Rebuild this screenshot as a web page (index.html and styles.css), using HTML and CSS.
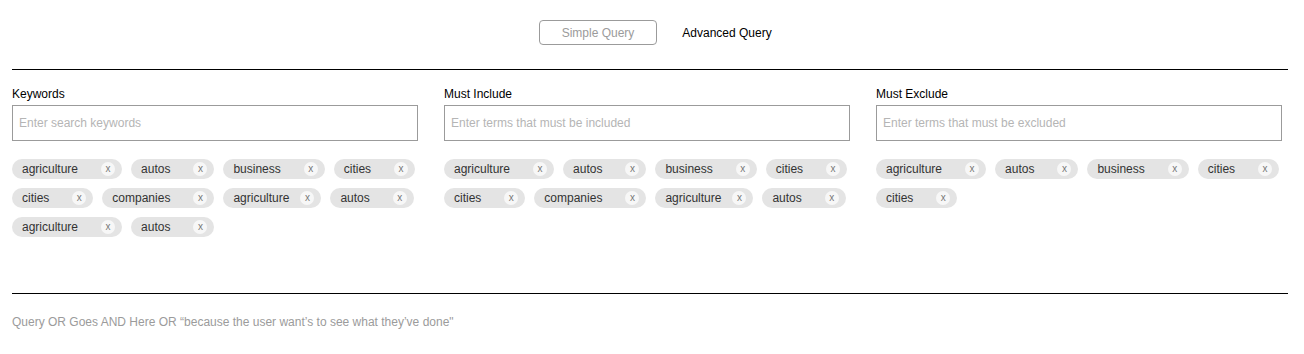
FILE: index.html
```html
<!DOCTYPE html>
<html lang="en">
  <head>
    <meta charset="UTF-8" />
    <meta name="viewport" content="width=device-width, initial-scale=1.0" />
    <title>Query Builder</title>
    <link rel="stylesheet" href="styles.css">
  </head>
  <body>
    <div class="mode-toggle">
      <button class="mode-button active">Simple Query</button>
      <button class="mode-button">Advanced Query</button>
    </div>

    <hr class="divider" />

    <div class="fields">
      <!-- Keywords -->
      <div class="field">
        <label class="field-label" for="keywords">Keywords</label>
        <input id="keywords" class="field-input" type="text" placeholder="Enter search keywords" />
        <div class="tag-list">
          <span class="tag"><span class="tag-text">agriculture</span><span class="tag-remove">x</span></span>
          <span class="tag"><span class="tag-text">autos</span><span class="tag-remove">x</span></span>
          <span class="tag"><span class="tag-text">business</span><span class="tag-remove">x</span></span>
          <span class="tag"><span class="tag-text">cities</span><span class="tag-remove">x</span></span>
          <span class="tag"><span class="tag-text">cities</span><span class="tag-remove">x</span></span>
          <span class="tag"><span class="tag-text">companies</span><span class="tag-remove">x</span></span>
          <span class="tag compact"><span class="tag-text">agriculture</span><span class="tag-remove">x</span></span>
          <span class="tag"><span class="tag-text">autos</span><span class="tag-remove">x</span></span>
          <span class="tag"><span class="tag-text">agriculture</span><span class="tag-remove">x</span></span>
          <span class="tag"><span class="tag-text">autos</span><span class="tag-remove">x</span></span>
        </div>
      </div>

      <!-- Must Include -->
      <div class="field">
        <label class="field-label" for="include">Must Include</label>
        <input id="include" class="field-input" type="text" placeholder="Enter terms that must be included" />
        <div class="tag-list">
          <span class="tag"><span class="tag-text">agriculture</span><span class="tag-remove">x</span></span>
          <span class="tag"><span class="tag-text">autos</span><span class="tag-remove">x</span></span>
          <span class="tag"><span class="tag-text">business</span><span class="tag-remove">x</span></span>
          <span class="tag"><span class="tag-text">cities</span><span class="tag-remove">x</span></span>
          <span class="tag"><span class="tag-text">cities</span><span class="tag-remove">x</span></span>
          <span class="tag"><span class="tag-text">companies</span><span class="tag-remove">x</span></span>
          <span class="tag compact"><span class="tag-text">agriculture</span><span class="tag-remove">x</span></span>
          <span class="tag"><span class="tag-text">autos</span><span class="tag-remove">x</span></span>
        </div>
      </div>

      <!-- Must Exclude -->
      <div class="field">
        <label class="field-label" for="exclude">Must Exclude</label>
        <input id="exclude" class="field-input" type="text" placeholder="Enter terms that must be excluded" />
        <div class="tag-list">
          <span class="tag"><span class="tag-text">agriculture</span><span class="tag-remove">x</span></span>
          <span class="tag"><span class="tag-text">autos</span><span class="tag-remove">x</span></span>
          <span class="tag"><span class="tag-text">business</span><span class="tag-remove">x</span></span>
          <span class="tag"><span class="tag-text">cities</span><span class="tag-remove">x</span></span>
          <span class="tag"><span class="tag-text">cities</span><span class="tag-remove">x</span></span>
        </div>
      </div>
    </div>

    <hr class="divider" />

    <p class="query-preview">Query OR Goes AND Here OR “because the user want’s to see what they’ve done"</p>
  </body>
</html>
```

FILE: styles.css
```css
:root {
  --text-color: #000;
  --muted-color: #9b9b9b;
  --border-color: #9b9b9b;
  --tag-bg: #e4e4e4;
  --tag-text: #333;
  --remove-bg: #f7f7f7;
}
body {
  margin: 0;
  padding: 20px 16px 0 12px;
  font-family: "Liberation Sans", Arial, sans-serif;
  font-size: 12px;
  color: var(--text-color);
  background: #fff;
}

/* Simple / Advanced toggle */
.mode-toggle {
  display: flex;
  justify-content: center;
  gap: 11px;
  padding-left: 25px;
  margin-bottom: 24px;
}
.mode-button {
  width: 118px;
  height: 25px;
  padding: 0;
  font-family: inherit;
  font-size: 12px;
  color: var(--text-color);
  background: none;
  border: 1px solid transparent;
  border-radius: 4px;
  cursor: pointer;
}
.mode-button.active {
  color: var(--muted-color);
  border-color: var(--border-color);
}

.divider {
  margin: 0;
  border: none;
  border-top: 1px solid #000;
}

/* Three field columns */
.fields {
  display: grid;
  grid-template-columns: repeat(3, 406px);
  column-gap: 26px;
  padding-top: 17px;
  height: 206px;
}
.field-label {
  display: block;
  line-height: 14px;
  margin-bottom: 4px;
}
.field-input {
  box-sizing: border-box;
  width: 100%;
  height: 36px;
  margin: 0;
  padding: 0 6px;
  font-family: inherit;
  font-size: 12px;
  border: 1px solid var(--border-color);
  border-radius: 0;
  outline: none;
}
.field-input::placeholder {
  color: #b5b5b5;
}

.tag-list {
  display: flex;
  flex-wrap: wrap;
  gap: 9px;
  margin-top: 18px;
}
.tag {
  display: inline-flex;
  align-items: center;
  height: 20px;
  padding: 0 7px 0 10px;
  background: var(--tag-bg);
  border-radius: 10px;
  color: var(--tag-text);
}
.tag-remove {
  display: flex;
  align-items: center;
  justify-content: center;
  width: 14px;
  height: 14px;
  margin-left: 23px;
  border-radius: 50%;
  background: var(--remove-bg);
  color: #777;
  font-size: 10px;
  line-height: 1;
  cursor: pointer;
}
.tag.compact .tag-remove {
  margin-left: 11px;
}

.query-preview {
  margin: 21px 0 0;
  color: var(--muted-color);
  line-height: 14px;
}
```
